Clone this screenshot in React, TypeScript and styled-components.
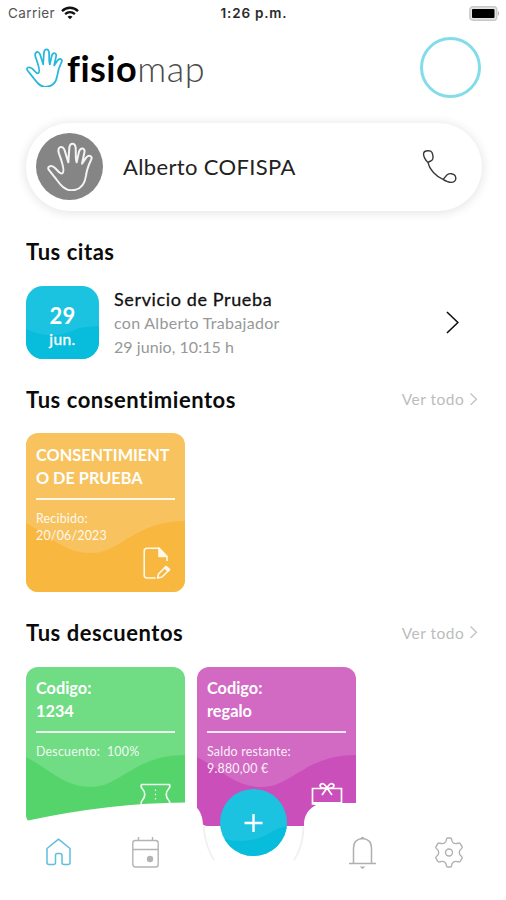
import React from "react";
import styled, { createGlobalStyle } from "styled-components";

const GlobalStyle = createGlobalStyle`
  * { box-sizing: border-box; }
  body { margin: 0; background: #fff; font-family: Lato, sans-serif; color: #0b0b0b; }
  svg { display: block; flex: none; }
`;

const Screen = styled.main`
  position: relative;
  width: 506px;
  height: 900px;
  overflow: hidden;
  background: #fff;
`;

const StatusBar = styled.div`
  display: grid;
  grid-template-columns: 1fr auto 1fr;
  align-items: center;
  height: 26px;
  padding: 0 6px 0 8px;
  font-family: Inter, sans-serif;
  font-size: 13.5px;
`;

const Carrier = styled.div`
  display: flex;
  align-items: center;
  gap: 6px;
  color: #555;
  letter-spacing: 0.4px;
`;

const Clock = styled.div`
  font-weight: 600;
  letter-spacing: 0.8px;
  color: #2a2a2a;
`;

const BatterySlot = styled.div`
  display: flex;
  justify-content: flex-end;
`;

const Header = styled.header`
  display: flex;
  align-items: center;
  height: 84px;
  padding: 0 25px 1px 26px;
`;

const Wordmark = styled.div`
  flex: 1;
  margin-left: 4px;
  font-size: 36px;
  line-height: 44px;
  font-weight: 300;
  letter-spacing: 0.6px;
  font-variant-ligatures: none;
  color: #4a4a4a;
`;

const WordmarkStrong = styled.span`
  font-weight: 700;
  letter-spacing: 0.5px;
  color: #000;
`;

const ProfileRing = styled.div`
  width: 61px;
  height: 61px;
  border: 3.5px solid #82dce9;
  border-radius: 50%;
`;

const ContactCard = styled.section`
  display: flex;
  align-items: center;
  width: 456px;
  height: 88px;
  margin: 12.5px 0 0 26px;
  padding: 0 25px 0 10px;
  border-radius: 44px;
  background: #fff;
  box-shadow: 0 1px 10px 2px rgba(0, 0, 0, 0.09);
`;

const Avatar = styled.div`
  display: flex;
  align-items: center;
  justify-content: center;
  width: 67px;
  height: 67px;
  border-radius: 50%;
  background: #858585;
`;

const ContactName = styled.div`
  flex: 1;
  margin: -1px 0 0 20px;
  font-size: 22px;
  letter-spacing: 0.35px;
  color: #222;
`;

const SectionHead = styled.div`
  display: flex;
  align-items: center;
  justify-content: space-between;
  height: 28px;
  margin-top: 27px;
  padding: 0 28.5px 0 26px;
`;

const SectionTitle = styled.h2`
  margin: 0;
  font-size: 22px;
  line-height: 28px;
  font-weight: 700;
  letter-spacing: 0.53px;
`;

const SeeAll = styled.a`
  display: flex;
  align-items: center;
  gap: 6px;
  margin-top: -1px;
  font-size: 15.5px;
  letter-spacing: 0.5px;
  color: #bcbcbc;
`;

const Appointment = styled.article`
  display: flex;
  align-items: center;
  height: 73px;
  margin-top: 20px;
  padding: 0 47px 0 26px;
`;

const DateTile = styled.div`
  position: relative;
  display: flex;
  flex-direction: column;
  align-items: center;
  width: 73px;
  height: 73px;
  overflow: hidden;
  padding-top: 16px;
  border-radius: 17px;
  background: #1cc3e0;
  color: #fff;
`;

const Wave = styled.svg`
  position: absolute;
  left: 0;
  bottom: 0;
`;

const Day = styled.div`
  position: relative;
  font-size: 22px;
  line-height: 28px;
  font-weight: 700;
  letter-spacing: 0.3px;
`;

const Month = styled.div`
  position: relative;
  font-size: 15.5px;
  line-height: 19px;
  letter-spacing: 0.4px;
  -webkit-text-stroke: 0.35px #fff;
`;

const AppointmentText = styled.div`
  flex: 1;
  margin-left: 15px;
  padding-top: 2px;
  font-size: 16px;
  line-height: 24px;
  letter-spacing: 0.3px;
  color: #989898;
`;

const ServiceName = styled.div`
  font-size: 18px;
  letter-spacing: 0.62px;
  color: #111;
  -webkit-text-stroke: 0.3px #111;
`;

const AppointmentTime = styled.div`
  letter-spacing: 0.05px;
`;

const CardRow = styled.div`
  display: flex;
  gap: 12px;
  margin-top: 19.5px;
  padding-left: 26px;
`;

const CardBox = styled.article<{ $light: string }>`
  position: relative;
  width: 159px;
  height: 159px;
  overflow: hidden;
  padding: 9.5px 10px;
  border-radius: 12px;
  background: ${(p) => p.$light};
  color: #fff;
`;

const CardTitle = styled.div`
  position: relative;
  height: 55px;
  font-size: 16.3px;
  line-height: 23.3px;
  font-weight: 700;
  letter-spacing: 0;
  white-space: pre;
`;

const CardRule = styled.div`
  position: relative;
  height: 2px;
  background: rgba(255, 255, 255, 0.85);
`;

const CardNote = styled.div`
  position: relative;
  margin-top: 10.3px;
  font-size: 12.4px;
  line-height: 17px;
  letter-spacing: 0.22px;
  white-space: pre;
  opacity: 0.9;
`;

const CardIcon = styled.div<{ $x: number; $y: number }>`
  position: absolute;
  left: ${(p) => p.$x}px;
  top: ${(p) => p.$y}px;
`;

const BottomNav = styled.nav`
  position: absolute;
  left: 0;
  bottom: 0;
  width: 506px;
  height: 110px;
`;

const NavShape = styled.svg`
  position: absolute;
  inset: 0;
`;

const NavItems = styled.div`
  position: relative;
  display: grid;
  grid-template-columns: 116px 59px 157px 60px 114px;
  height: 66px;
  margin-top: 29px;
  align-items: center;
  justify-items: center;
`;

const AddButton = styled.button`
  width: 67px;
  height: 67px;
  margin-top: -59px;
  padding: 0;
  border: 0;
  border-radius: 50%;
  overflow: hidden;
  background: #1cc3e0;
`;

const Hand = ({ size, color, width }: { size: number; color: string; width: number }) => (
  <svg width={size} height={size * 1.08} viewBox="139 95 138 149" fill="none" stroke={color} strokeWidth={width} strokeLinejoin="round" strokeLinecap="round">
    <path d="M144 178C139 169 150 162 162 172C172 181 180 194 186 188C193 181 184 154 175 130C168 108 186 103 192 120L203 156L206 112C208 96 223 96 225 112C226 130 224 146 228 156L235 124C240 109 255 113 251 127L244 160L257 141C266 131 277 138 271 149C262 168 258 180 256 196C252 222 238 240 212 240C186 240 174 214 160 198Z" />
  </svg>
);

const Chevron = ({ h, color, width }: { h: number; color: string; width: number }) => (
  <svg width={h * 0.58} height={h} viewBox="0 0 14 24" fill="none" stroke={color} strokeWidth={width}>
    <path d="M1 1L12.500 12L1 23" />
  </svg>
);

const WifiIcon = () => (
  <svg width="18" height="14" viewBox="0 0 18 14" fill="none" stroke="#111" strokeWidth="2.300">
    <path d="M1 5.100C5.500.600 12.500.600 17 5.100M4.100 8.200C7 5.500 11 5.500 13.900 8.200" />
    <path d="M6.500 10.700Q9 8.800 11.500 10.700L9 13.300Z" fill="#111" stroke="none" />
  </svg>
);

const BatteryIcon = () => (
  <svg width="31" height="15" viewBox="0 0 31 15">
    <rect x=".8" y=".8" width="27" height="13.400" rx="3" fill="#e4e4e4" stroke="#c8c8c8" strokeWidth="1.400" />
    <rect x="3" y="3" width="22.500" height="9" rx="1" fill="#000" />
    <path d="M29 5V10Q31 7.500 29 5" fill="#aaa" />
  </svg>
);

const PhoneIcon = () => (
  <svg width="35" height="36" viewBox="0 0 35 36" fill="none" stroke="#3a3a3a" strokeWidth="1.400" strokeLinejoin="round" strokeLinecap="round">
    <path d="M6.200 13.700C3.500 11.500 1 7 1.700 4C2.500 1.200 8.800 1 10 3.500C10.800 5.500 11.500 8.500 10.500 10.500C9.500 12.500 7 12 6.200 13.700C7 20 14.500 27.800 21 30.300C22.500 29.500 23.500 27 25.500 25.500C27.500 24 31.500 24.500 33 26.500C34 28.500 34 31 32.500 32.300C29.500 34.500 24.500 32.500 21 30.300" />
  </svg>
);

const NoteIcon = () => (
  <svg width="28" height="33" viewBox="0 0 28 33" fill="none" stroke="#fff" strokeWidth="1.600" strokeLinejoin="round" opacity=".9">
    <path d="M12.500 31H4Q1.200 31 1.200 28V4Q1.200 1.200 4 1.200H16L24 9.500V14" />
    <path d="M16 1.200V9.500H24Z" fill="#fff" />
    <path d="M15.500 27L23 19.500L26.500 22.500L19 30L14.500 31Z" />
    <path d="M21.500 21L25 24L26.500 22.500L23 19.500Z" fill="#fff" />
  </svg>
);

const TicketIcon = () => (
  <svg width="33" height="24" viewBox="0 0 33 24" fill="none" stroke="#fff" strokeWidth="1.700" strokeLinejoin="round" opacity=".9">
    <path d="M2.500 1.500H30.500Q31.500 4 29.500 6C26.500 9 26.500 14 29.500 17Q31.500 19 30.500 22H2.500Q1.500 19 3.500 17C6.500 14 6.500 9 3.500 6Q1.500 4 2.500 1.500Z" />
    <path d="M16.500 6.500V17" strokeDasharray="1.500 2.700" strokeWidth="1.200" />
  </svg>
);

const GiftIcon = () => (
  <svg width="32" height="32" viewBox="0 0 32 32" fill="none" stroke="#fff" strokeWidth="1.700">
    <path d="M1.500 6.500H30.500V22H1.500Z" />
    <path d="M2 20H30V24H6L2 22" fill="#fff" stroke="none" />
    <path d="M16 6C11 7 8 5 9.500 2.500C11.500.500 14 2 16 6C18 2 20.500.500 22.500 2.500C24 5 21 7 16 6L11 13M16 6L21 13" />
  </svg>
);

const HomeIcon = () => (
  <svg width="25" height="28" viewBox="0 0 25 28" fill="none" stroke="#5cc0de" strokeWidth="1.500" strokeLinejoin="round">
    <path d="M1 10.500L12.500 1.200L24 10.500V24.500Q24 26.500 22 26.500H18Q16 26.500 16 24.500V17.500Q16 15.500 14 15.500H11Q9.500 15.500 9.500 17.500V24.500Q9.500 26.500 7.500 26.500H3Q1 26.500 1 24.500Z" />
  </svg>
);

const CalendarIcon = () => (
  <svg width="27" height="31" viewBox="0 0 27 31" fill="none" stroke="#b4b4b4" strokeWidth="1.400">
    <rect x=".8" y="3.500" width="25.400" height="26.500" rx="2.500" />
    <path d="M1 12.500H26M6.500 0V4M20.500 0V4" />
    <circle cx="18" cy="22" r="3.200" fill="#b4b4b4" stroke="none" />
  </svg>
);

const BellIcon = () => (
  <svg width="27" height="33" viewBox="0 0 27 33" fill="none" stroke="#b0b0b0" strokeWidth="1.500">
    <path d="M0 27.500H27M4.500 27V12C4.500 6.500 8 3 13.500 2.500C19 3 22.500 6.500 22.500 12V27" />
    <path d="M11 2.800Q13.500-1.500 16 2.800ZM10.500 30.500H16.500L13.500 33Z" fill="#b0b0b0" stroke="none" />
  </svg>
);

const GearIcon = () => (
  <svg width="30" height="31" viewBox="0 0 30 31" fill="none" stroke="#b0b0b0" strokeWidth="1.400" strokeLinejoin="round">
    <path d="M12.500 2Q12.600 1 13.600 1H16.400Q17.400 1 17.500 2C17.700 5 19.500 7.500 24 6.300Q25.500 5.700 26.200 6.600L28 9.600Q28.600 10.700 27.600 11.500C24.500 13.600 24.500 17.400 27.600 19.500Q28.600 20.300 28 21.400L26.200 24.400Q25.500 25.300 24 24.700C19.500 23.500 17.700 26 17.500 29Q17.400 30 16.400 30H13.600Q12.600 30 12.500 29C12.300 26 10.500 23.500 6 24.700Q4.500 25.300 3.800 24.400L2 21.400Q1.400 20.300 2.400 19.500C5.500 17.400 5.500 13.600 2.400 11.500Q1.400 10.700 2 9.600L3.800 6.600Q4.500 5.700 6 6.300C10.500 7.500 12.300 5 12.500 2Z" />
    <circle cx="15" cy="15.500" r="3.500" />
  </svg>
);

const PlusIcon = () => (
  <svg width="67" height="67" viewBox="0 0 67 67">
    <path d="M0 49C18 54 34 52 46 46C54 41 61 38 67 37V67H0Z" fill="#08bddb" />
    <path d="M33.500 25V43M24.500 34H42.500" stroke="#fff" strokeWidth="2.400" />
  </svg>
);

interface InfoCardProps {
  light: string;
  dark: string;
  title: string;
  note: string;
  iconX: number;
  iconY: number;
  children: React.ReactNode;
}

const InfoCard = ({ light, dark, title, note, iconX, iconY, children }: InfoCardProps) => (
  <CardBox $light={light}>
    <Wave width="159" height="72" viewBox="0 0 159 72" fill={dark}>
      <path d="M0 3C25 16 38 33 65 33C95 33 108 1 159 1V72H0Z" />
    </Wave>
    <CardTitle>{title}</CardTitle>
    <CardRule />
    <CardNote>{note}</CardNote>
    <CardIcon $x={iconX} $y={iconY}>{children}</CardIcon>
  </CardBox>
);

const SeeAllLink = () => (
  <SeeAll>
    Ver todo
    <Chevron h={12.5} color="#c0c0c0" width={2.4} />
  </SeeAll>
);

export default function App() {
  return (
    <Screen>
      <GlobalStyle />
      <StatusBar>
        <Carrier>Carrier <WifiIcon /></Carrier>
        <Clock>1:26 p.m.</Clock>
        <BatterySlot><BatteryIcon /></BatterySlot>
      </StatusBar>
      <Header>
        <Hand size={37} color="#27b7dc" width={6.5} />
        <Wordmark><WordmarkStrong>fisio</WordmarkStrong>map</Wordmark>
        <ProfileRing />
      </Header>
      <ContactCard>
        <Avatar><Hand size={46} color="#f4f4f4" width={6} /></Avatar>
        <ContactName>Alberto COFISPA</ContactName>
        <PhoneIcon />
      </ContactCard>

      <SectionHead>
        <SectionTitle>Tus citas</SectionTitle>
      </SectionHead>
      <Appointment>
        <DateTile>
          <Wave width="73" height="33" viewBox="0 0 73 33" fill="#08bddb">
            <path d="M0 3C14 10 32 12 48 4C57 0 65 1 73 0V33H0Z" />
          </Wave>
          <Day>29</Day>
          <Month>jun.</Month>
        </DateTile>
        <AppointmentText>
          <ServiceName>Servicio de Prueba</ServiceName>
          <div>con Alberto Trabajador</div>
          <AppointmentTime>29 junio, 10:15 h</AppointmentTime>
        </AppointmentText>
        <Chevron h={23} color="#111" width={1.7} />
      </Appointment>

      <SectionHead>
        <SectionTitle>Tus consentimientos</SectionTitle>
        <SeeAllLink />
      </SectionHead>
      <CardRow>
        <InfoCard light="#f8c35e" dark="#f8b840" title={"CONSENTIMIENT\nO DE PRUEBA"} note={"Recibido:\n20/06/2023"} iconX={117} iconY={114}>
          <NoteIcon />
        </InfoCard>
      </CardRow>

      <SectionHead>
        <SectionTitle>Tus descuentos</SectionTitle>
        <SeeAllLink />
      </SectionHead>
      <CardRow>
        <InfoCard light="#70dc83" dark="#54d46b" title={"Codigo:\n1234"} note="Descuento:  100%" iconX={113} iconY={116.5}>
          <TicketIcon />
        </InfoCard>
        <InfoCard light="#d26ac4" dark="#ca4fba" title={"Codigo:\nregalo"} note={"Saldo restante:\n9.880,00 €"} iconX={114} iconY={115}>
          <GiftIcon />
        </InfoCard>
      </CardRow>

      <BottomNav>
        <NavShape width="506" height="110" viewBox="0 0 506 110">
          <path d="M0 37Q20 32 28 30.500Q110 13 185 12.500C195 12 203 22 203 35C203 60 225 82 254 82C283 82 304 60 304 35C304 22 313 13 327 13H355C410 14 460 22 506 34V110H0Z" fill="#fff" />
          <path d="M203.500 37Q206 58 214 70M303.500 37Q303 57 294 70" fill="none" stroke="#f1f1f1" strokeWidth="2" />
        </NavShape>
        <NavItems>
          <HomeIcon />
          <CalendarIcon />
          <AddButton aria-label="+">
            <PlusIcon />
          </AddButton>
          <BellIcon />
          <GearIcon />
        </NavItems>
      </BottomNav>
    </Screen>
  );
}
